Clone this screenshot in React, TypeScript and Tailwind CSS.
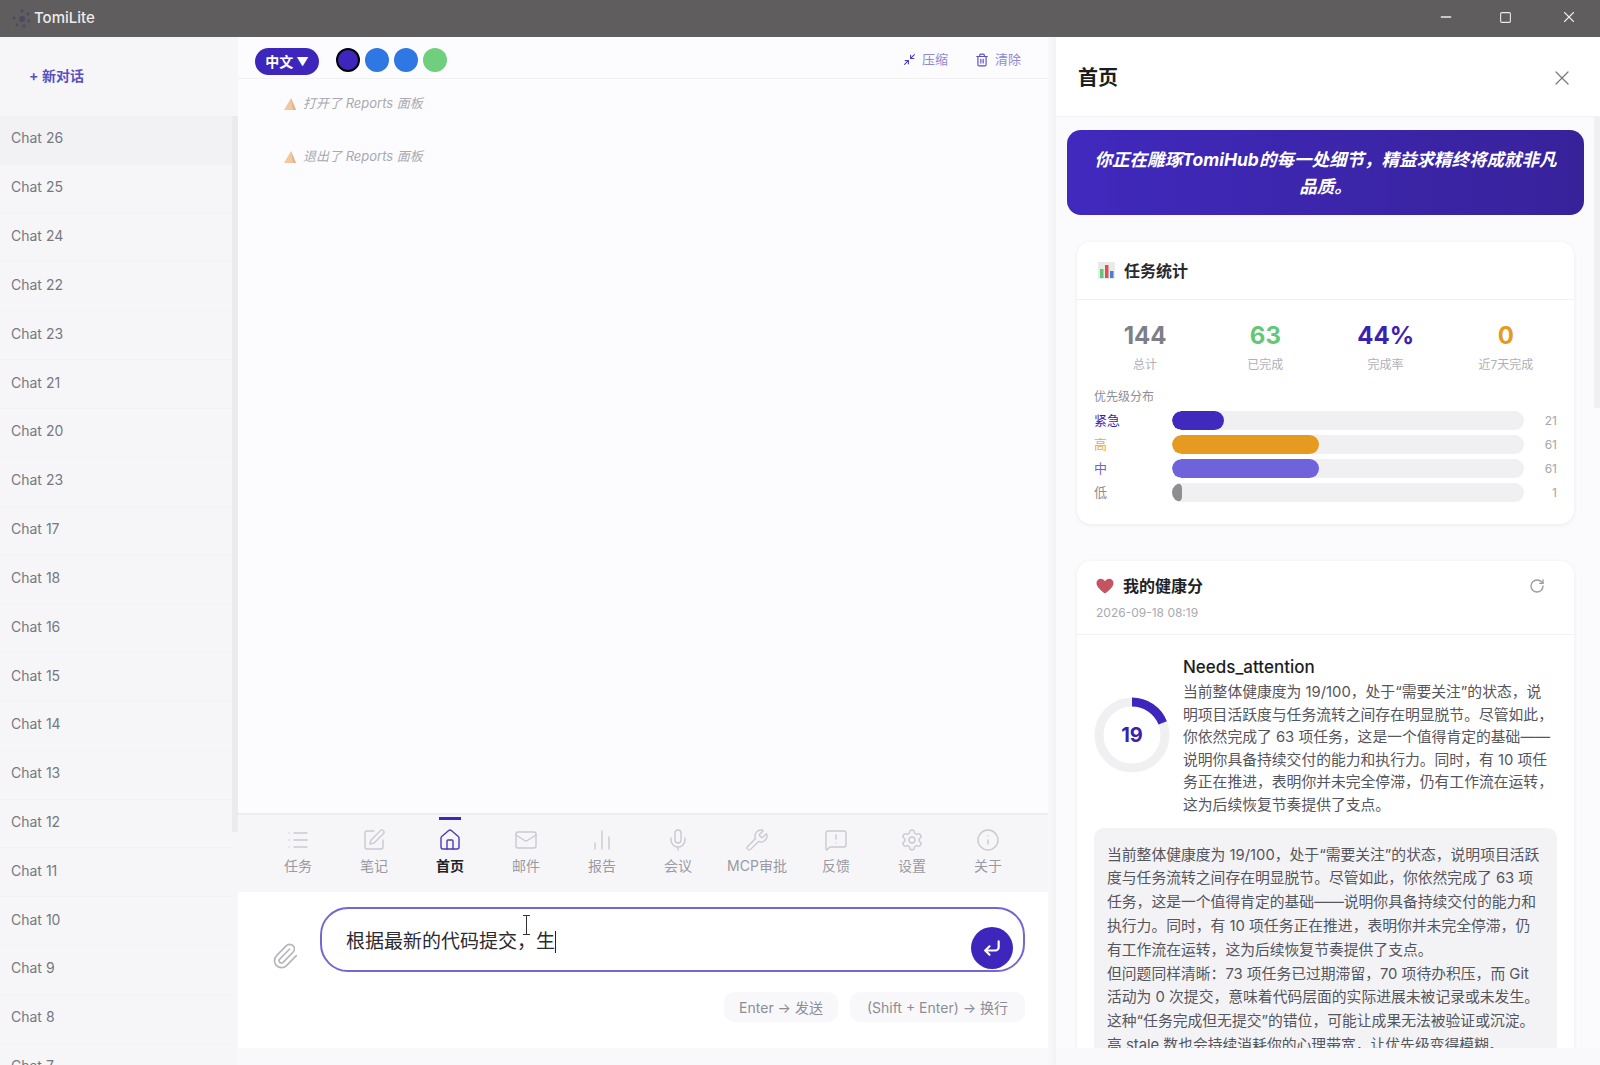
import {
  ChartNoAxesColumn,
  CornerDownLeft,
  House,
  Info,
  List,
  Mail,
  MessageSquareWarning,
  Mic,
  Minimize2,
  Minus,
  Paperclip,
  RotateCw,
  Settings,
  Square,
  SquarePen,
  Trash2,
  Wrench,
  X,
} from "lucide-react";

const CHATS = [26, 25, 24, 22, 23, 21, 20, 23, 17, 18, 16, 15, 14, 13, 12, 11, 10, 9, 8, 7];

const NAV = [
  { label: "任务", icon: List },
  { label: "笔记", icon: SquarePen },
  { label: "首页", icon: House, active: true },
  { label: "邮件", icon: Mail },
  { label: "报告", icon: ChartNoAxesColumn },
  { label: "会议", icon: Mic },
  { label: "MCP审批", icon: Wrench },
  { label: "反馈", icon: MessageSquareWarning },
  { label: "设置", icon: Settings },
  { label: "关于", icon: Info },
];

const STATS = [
  { value: "144", label: "总计", color: "text-[#7d7f88]" },
  { value: "63", label: "已完成", color: "text-[#62c878]" },
  { value: "44%", label: "完成率", color: "text-[#3a22b0]" },
  { value: "0", label: "近7天完成", color: "text-[#e69a20]" },
];

const PRIORITIES = [
  { label: "紧急", count: 21, width: 52, text: "text-[#3a22b0]", bar: "bg-[#4029bd]" },
  { label: "高", count: 61, width: 147, text: "text-[#e8a94a]", bar: "bg-[#e69a20]" },
  { label: "中", count: 61, width: 147, text: "text-[#6d63dc]", bar: "bg-[#6f63dc]" },
  { label: "低", count: 1, width: 10, text: "text-[#8d8d95]", bar: "bg-[#8e8e92]" },
];

const SUMMARY_LINES = [
  "当前整体健康度为 19/100，处于“需要关注”的状态，说",
  "明项目活跃度与任务流转之间存在明显脱节。尽管如此，",
  "你依然完成了 63 项任务，这是一个值得肯定的基础——",
  "说明你具备持续交付的能力和执行力。同时，有 10 项任",
  "务正在推进，表明你并未完全停滞，仍有工作流在运转，",
  "这为后续恢复节奏提供了支点。",
];

const DETAIL_LINES = [
  "当前整体健康度为 19/100，处于“需要关注”的状态，说明项目活跃",
  "度与任务流转之间存在明显脱节。尽管如此，你依然完成了 63 项",
  "任务，这是一个值得肯定的基础——说明你具备持续交付的能力和",
  "执行力。同时，有 10 项任务正在推进，表明你并未完全停滞，仍",
  "有工作流在运转，这为后续恢复节奏提供了支点。",
  "但问题同样清晰：73 项任务已过期滞留，70 项待办积压，而 Git",
  "活动为 0 次提交，意味着代码层面的实际进展未被记录或未发生。",
  "这种“任务完成但无提交”的错位，可能让成果无法被验证或沉淀。",
  "高 stale 数也会持续消耗你的心理带宽，让优先级变得模糊。",
];

function SailIcon() {
  return (
    <svg width="14" height="14" viewBox="0 0 14 14" className="shrink-0">
      <path d="M8 1 L13 13 L1 13 Z" fill="#f0c9a4" />
      <path d="M8 1 L10 13 L13 13 Z" fill="#e8b184" />
    </svg>
  );
}

function Logo() {
  return (
    <svg width="22" height="22" viewBox="0 0 22 22" className="shrink-0 opacity-80">
      <g fill="#4a4468">
        <circle cx="11" cy="3" r="1.6" />
        <circle cx="17" cy="6" r="1.4" />
        <circle cx="18" cy="13" r="1.4" />
        <circle cx="13" cy="18" r="1.6" />
        <circle cx="6" cy="17" r="1.4" />
        <circle cx="3" cy="10" r="1.6" />
        <circle cx="11" cy="11" r="3" />
      </g>
    </svg>
  );
}

function ChartIcon() {
  return (
    <svg width="17" height="17" viewBox="0 0 17 17" className="shrink-0">
      <rect x="0" y="0" width="17" height="17" fill="#e8ebe8" />
      <rect x="2" y="7" width="3.5" height="9" fill="#62c878" />
      <rect x="7" y="3" width="3.5" height="13" fill="#d9534f" />
      <rect x="12" y="9" width="3.5" height="7" fill="#4a7fd0" />
    </svg>
  );
}

function HeartIcon() {
  return (
    <svg width="18" height="16" viewBox="0 0 18 16" className="shrink-0">
      <path d="M9 15.5 C3 11 0.5 8 0.5 5 C0.5 2.4 2.5 0.8 4.7 0.8 C6.5 0.8 8 1.8 9 3.3 C10 1.8 11.5 0.8 13.3 0.8 C15.5 0.8 17.5 2.4 17.5 5 C17.5 8 15 11 9 15.5 Z" fill="#c4545f" />
    </svg>
  );
}

function Sidebar() {
  return (
    <aside className="flex w-[238px] shrink-0 bg-[#f6f6f9]">
      <div className="flex-1 min-w-0">
        <div className="flex h-[79px] items-center pb-[2px] pl-[29px] text-[14px] font-semibold text-[#5b4fc0]">
          + 新对话
        </div>
        {CHATS.map((n, i) => (
          <div
            key={i}
            className={`flex h-[48.83px] items-center border-b border-[#f3f3f6] pb-[4px] pl-[11px] text-[14px] text-[#77787f] ${
              i === 0 ? "bg-[#f2f2f5]" : ""
            }`}
          >
            Chat {n}
          </div>
        ))}
      </div>
      <div className="w-[6px] shrink-0 pt-[79px]">
        <div className="h-[716px] bg-[#ebebee]" />
      </div>
    </aside>
  );
}

function Conversation() {
  return (
    <main className="flex min-w-0 flex-1 flex-col border-r-8 border-[#f8f8fb] bg-[#fcfcfe]">
      <div className="flex h-[42px] shrink-0 items-center border-b border-[#f1f1f4] pl-[17px] pr-[27px] pt-[4px]">
        <div className="mt-[4px] flex h-[27px] w-[64px] items-center justify-center gap-[3px] rounded-full bg-[#3e26bd] text-[14px] font-bold text-white">
          中文 <span className="text-[12px]">▼</span>
        </div>
        <div className="ml-[17px] flex items-center gap-[5px]">
          <div className="h-[24px] w-[24px] rounded-full border-2 border-black bg-[#3e26bd]" />
          <div className="h-[24px] w-[24px] rounded-full bg-[#2f78e4]" />
          <div className="h-[24px] w-[24px] rounded-full bg-[#2f78e4]" />
          <div className="h-[24px] w-[24px] rounded-full bg-[#6fcf7c]" />
        </div>
        <div className="ml-auto flex items-center gap-[6px] text-[13px] text-[#8f88d4]">
          <Minimize2 size={13} className="text-[#4a3cc0]" />
          压缩
        </div>
        <div className="ml-[27px] flex items-center gap-[6px] text-[13px] text-[#8f88d4]">
          <Trash2 size={14} className="text-[#5b4fc0]" />
          清除
        </div>
      </div>

      <div className="flex-1 pl-[45px] pt-[15px]">
        <div className="flex h-[20px] items-center gap-[6px] text-[13px] italic text-[#a9a9b0]">
          <SailIcon />
          打开了 Reports 面板
        </div>
        <div className="mt-[33px] flex h-[20px] items-center gap-[6px] text-[13px] italic text-[#a9a9b0]">
          <SailIcon />
          退出了 Reports 面板
        </div>
      </div>

      <nav className="flex h-[79px] shrink-0 border-t-2 border-[#ededf0] bg-[#f6f6f9] pl-[22px]">
        {NAV.map((item) => {
          const Icon = item.icon;
          return (
            <div
              key={item.label}
              className={`flex h-full shrink-0 flex-col items-center pt-[13px] ${
                item.label === "MCP审批" ? "w-[82px]" : "w-[76px]"
              }`}
            >
              <div className="relative">
                {item.active && (
                  <div className="absolute -top-[11px] left-[1px] h-[3px] w-[22px] bg-[#3e26bd]" />
                )}
                <Icon
                  size={24}
                  strokeWidth={1.4}
                  className={item.active ? "text-[#4a3cb8]" : "text-[#c9c9cf]"}
                />
              </div>
              <span
                className={`mt-[4px] text-[14px] leading-[20px] ${
                  item.active ? "font-bold text-[#222226]" : "text-[#9a9aa2]"
                }`}
              >
                {item.label}
              </span>
            </div>
          );
        })}
      </nav>

      <div className="h-[156px] shrink-0 bg-white pl-[33px] pr-[23px] pt-[15px]">
        <div className="flex items-end gap-[21px]">
          <Paperclip size={28} strokeWidth={1.4} className="mb-[2px] text-[#b4b4ba]" />
          <div className="relative flex h-[65px] flex-1 items-center rounded-[28px] border-2 border-[#7268d2] bg-white pl-[24px] pt-[5px] text-[19px] text-[#2b2b30]">
            <span>根据最新的代码提交，生</span>
            <span className="h-[22px] w-[1px] bg-[#222]" />
            <div className="absolute left-[204px] top-[6px] h-[20px] w-[1px] bg-[#333]">
              <div className="absolute -left-[3px] top-0 h-[1px] w-[7px] bg-[#333]" />
              <div className="absolute -left-[3px] bottom-0 h-[1px] w-[7px] bg-[#333]" />
            </div>
            <div className="absolute right-[10px] top-[18px] flex h-[42px] w-[42px] items-center justify-center rounded-full bg-[#3e26bd]">
              <CornerDownLeft size={20} strokeWidth={2.6} className="text-white" />
            </div>
          </div>
        </div>
        <div className="mt-[20px] flex justify-end gap-[12px] text-[14px] text-[#8d8d95]">
          <div className="flex h-[30px] items-center rounded-[10px] bg-[#f8f8fa] px-[15px]">Enter → 发送</div>
          <div className="flex h-[30px] items-center rounded-[10px] bg-[#f8f8fa] px-[17px]">(Shift + Enter) → 换行</div>
        </div>
      </div>
      <div className="h-[17px] shrink-0 bg-[#f9f9fb]" />
    </main>
  );
}

function TaskStats() {
  return (
    <section className="mx-[10px] mt-[27px] rounded-[14px] bg-white shadow-[0_1px_4px_rgba(0,0,0,0.07)]">
      <div className="flex h-[58px] items-center gap-[9px] border-b border-[#f0f0f3] pl-[21px] text-[16px] font-bold text-[#2a2a2e]">
        <ChartIcon />
        任务统计
      </div>
      <div className="px-[17px] pt-[19px]">
        <div className="-mx-[9px] grid grid-cols-4">
          {STATS.map((s) => (
            <div key={s.label} className="flex flex-col items-center">
              <span className={`text-[24px] font-bold leading-[34px] ${s.color}`}>{s.value}</span>
              <span className="mt-[3px] text-[12px] leading-[18px] text-[#b0b0b6]">{s.label}</span>
            </div>
          ))}
        </div>
        <div className="mt-[14px] text-[12px] leading-[18px] text-[#8d8d95]">优先级分布</div>
        <div className="mt-[5px] flex flex-col gap-[5px] pb-[22px]">
          {PRIORITIES.map((p) => (
            <div key={p.label} className="flex h-[19px] items-center">
              <span className={`w-[78px] text-[13px] ${p.text}`}>{p.label}</span>
              <div className="h-[19px] w-[352px] overflow-hidden rounded-full bg-[#f0f0f2]">
                <div className={`h-full rounded-full ${p.bar}`} style={{ width: p.width }} />
              </div>
              <span className="ml-auto text-[12px] text-[#a5a5ab]">{p.count}</span>
            </div>
          ))}
        </div>
      </div>
    </section>
  );
}

function HealthCard() {
  return (
    <section className="mx-[10px] mt-[37px] rounded-t-[14px] bg-white shadow-[0_1px_4px_rgba(0,0,0,0.07)]">
      <div className="h-[74px] border-b border-[#f0f0f3] pl-[19px] pr-[29px] pt-[13px]">
        <div className="flex items-center gap-[9px] text-[16px] font-bold leading-[24px] text-[#222226]">
          <HeartIcon />
          我的健康分
          <RotateCw size={16} className="ml-auto text-[#9b9ba2]" />
        </div>
        <div className="mt-[6px] text-[12px] leading-[18px] text-[#a9a9b0]">2026-09-18 08:19</div>
      </div>
      <div className="px-[17px] pt-[19px]">
        <div className="flex items-start gap-[13px]">
          <div className="relative mt-[43px] h-[76px] w-[76px] shrink-0">
            <svg width="76" height="76" viewBox="0 0 76 76" className="-rotate-90">
              <circle cx="38" cy="38" r="33" fill="none" stroke="#f0f0f2" strokeWidth="9" />
              <circle
                cx="38"
                cy="38"
                r="33"
                fill="none"
                stroke="#3e26bd"
                strokeWidth="9"
                strokeDasharray="39.4 207.3"
              />
            </svg>
            <span className="absolute inset-0 flex items-center justify-center text-[20px] font-bold text-[#3a22b0]">
              19
            </span>
          </div>
          <div className="min-w-0 flex-1">
            <div className="text-[17px] font-medium leading-[26px] text-[#1d1d20]">Needs_attention</div>
            <div className="pt-[1px] text-[14.8px] leading-[22.6px] text-[#55555c]">
              {SUMMARY_LINES.map((line) => (
                <div key={line} className="whitespace-nowrap">
                  {line}
                </div>
              ))}
            </div>
          </div>
        </div>
        <div className="mt-[11px] rounded-t-[10px] bg-[#f3f3f6] pl-[13px] pr-[12px] pt-[16px] text-[14.8px] leading-[23.8px] text-[#55555c]">
          {DETAIL_LINES.map((line) => (
            <div key={line} className="whitespace-nowrap">
              {line}
            </div>
          ))}
        </div>
      </div>
    </section>
  );
}

function HomePanel() {
  return (
    <aside className="flex w-[544px] shrink-0 flex-col bg-[#fbfbfd] shadow-[-3px_0_6px_rgba(0,0,0,0.03)]">
      <div className="flex h-[80px] shrink-0 items-center justify-between border-b border-[#f1f1f4] bg-white pl-[22px] pr-[26px] pt-[3px]">
        <span className="text-[20px] font-bold text-[#1d1d20]">首页</span>
        <X size={24} strokeWidth={1.2} className="text-[#77777e]" />
      </div>
      <div className="flex h-[931px] shrink-0">
        <div className="min-w-0 flex-1 overflow-hidden pl-[11px] pr-[10px] pt-[13px]">
          <div className="flex h-[85px] items-center justify-center rounded-[14px] bg-gradient-to-r from-[#4029bd] to-[#38229a] px-[24px] text-center text-[17.5px] font-bold italic leading-[27px] text-white">
            你正在雕琢TomiHub的每一处细节，精益求精终将成就非凡品质。
          </div>
          <TaskStats />
          <HealthCard />
        </div>
        <div className="w-[6px] shrink-0">
          <div className="h-[291px] bg-[#f0f0f2]" />
        </div>
      </div>
      <div className="h-[17px] shrink-0 bg-[#f9f9fb]" />
    </aside>
  );
}

export default function App() {
  return (
    <div className="flex h-[1065px] w-[1600px] flex-col overflow-hidden bg-white font-['Inter','Noto_Sans_CJK_SC',sans-serif]">
      <header className="flex h-[37px] shrink-0 items-center bg-[#5f5d5e] pl-[11px] text-[#ececec]">
        <Logo />
        <span className="ml-[1px] text-[15px] font-medium">TomiLite</span>
        <div className="ml-auto flex items-center pb-[3px]">
          <Minus size={16} className="mr-[45px]" />
          <Square size={13} className="mr-[48px]" />
          <X size={18} strokeWidth={1.5} className="mr-[22px]" />
        </div>
      </header>
      <div className="flex min-h-0 flex-1 overflow-hidden">
        <Sidebar />
        <Conversation />
        <HomePanel />
      </div>
    </div>
  );
}
